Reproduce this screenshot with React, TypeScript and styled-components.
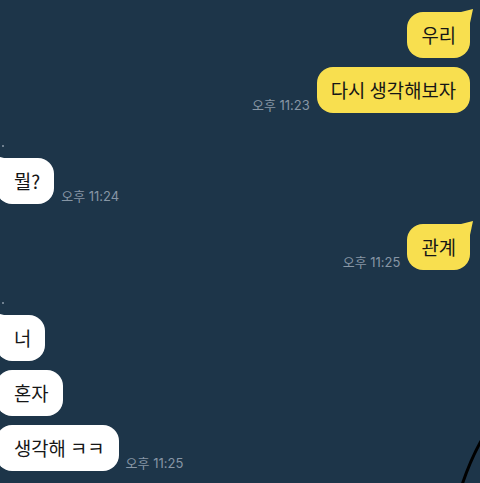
import React from 'react';
import styled, { createGlobalStyle, css } from 'styled-components';

const GlobalStyle = createGlobalStyle`
  html, body {
    margin: 0;
    padding: 0;
    background: #1d3549;
  }
  body {
    font-family: "Noto Sans CJK KR", "Noto Sans", sans-serif;
  }
`;

const Screen = styled.div`
  position: relative;
  width: 480px;
  height: 483px;
  overflow: hidden;
  background: #1d3549;
`;

const Thread = styled.div`
  display: flex;
  flex-direction: column;
  padding-top: 12px;
`;

const Group = styled.div<{ $mine?: boolean; $space?: number }>`
  display: flex;
  flex-direction: column;
  gap: 9px;
  align-items: ${(p) => (p.$mine ? 'flex-end' : 'flex-start')};
  padding-right: ${(p) => (p.$mine ? '10px' : '0')};
  margin-top: ${(p) => p.$space ?? 0}px;
`;

const Dot = styled.div`
  width: 2px;
  height: 2px;
  margin-left: 2px;
  margin-bottom: 2px;
  border-radius: 1px;
  background: #8b9aa8;
`;

const Row = styled.div<{ $mine?: boolean }>`
  display: flex;
  align-items: flex-end;
  gap: 7px;
  flex-direction: ${(p) => (p.$mine ? 'row-reverse' : 'row')};
`;

const Bubble = styled.div<{ $mine?: boolean; $tail?: boolean }>`
  position: relative;
  box-sizing: border-box;
  height: 46px;
  padding: 0 14px;
  display: flex;
  align-items: center;
  border-radius: 16px;
  font-size: 18.8px;
  line-height: 22px;
  color: #161616;
  white-space: nowrap;
  background: ${(p) => (p.$mine ? '#f8df4f' : '#ffffff')};
  ${(p) =>
    !p.$mine &&
    css`
      margin-left: -4px;
      padding-left: 18px;
    `}
  ${(p) =>
    p.$tail &&
    p.$mine &&
    css`
      border-top-right-radius: 5px;
      &::after {
        content: '';
        position: absolute;
        top: -3px;
        right: -3px;
        width: 12px;
        height: 14px;
        background: #f8df4f;
        clip-path: polygon(0 22%, 100% 0, 75% 100%, 0 100%);
      }
    `}
  ${(p) =>
    p.$tail &&
    !p.$mine &&
    css`
      border-top-left-radius: 5px;
      &::after {
        content: '';
        position: absolute;
        top: -2px;
        left: 0px;
        width: 12px;
        height: 14px;
        background: #ffffff;
        clip-path: polygon(100% 22%, 0 0, 25% 100%, 100% 100%);
      }
    `}
`;

const Time = styled.span`
  font-family: "Inter", "Noto Sans CJK KR", sans-serif;
  font-size: 13px;
  line-height: 14px;
  color: #8796a5;
  margin-bottom: 1px;
  white-space: nowrap;
`;

const Scribble = styled.svg`
  position: absolute;
  right: 0;
  bottom: 0;
`;

type Msg = { text: string; time?: string };

const Bubbles: React.FC<{ mine?: boolean; items: Msg[] }> = ({ mine, items }) => (
  <>
    {items.map((m, i) => (
      <Row key={i} $mine={mine}>
        <Bubble $mine={mine} $tail={i === 0}>
          {m.text}
        </Bubble>
        {m.time && <Time>{m.time}</Time>}
      </Row>
    ))}
  </>
);

export default function App() {
  return (
    <Screen>
      <GlobalStyle />
      <Thread>
        <Group $mine>
          <Bubbles mine items={[{ text: '우리' }, { text: '다시 생각해보자', time: '오후 11:23' }]} />
        </Group>
        <Group $space={32}>
          <Dot />
          <Bubbles items={[{ text: '뭘?', time: '오후 11:24' }]} />
        </Group>
        <Group $mine $space={20}>
          <Bubbles mine items={[{ text: '관계', time: '오후 11:25' }]} />
        </Group>
        <Group $space={32}>
          <Dot />
          <Bubbles items={[{ text: '너' }, { text: '혼자' }, { text: '생각해 ㅋㅋ', time: '오후 11:25' }]} />
        </Group>
      </Thread>
      <Scribble width="30" height="50" viewBox="0 0 30 50">
        <path d="M12 52 Q 20 28 31 8" stroke="#000" strokeWidth="3" fill="none" />
      </Scribble>
    </Screen>
  );
}
